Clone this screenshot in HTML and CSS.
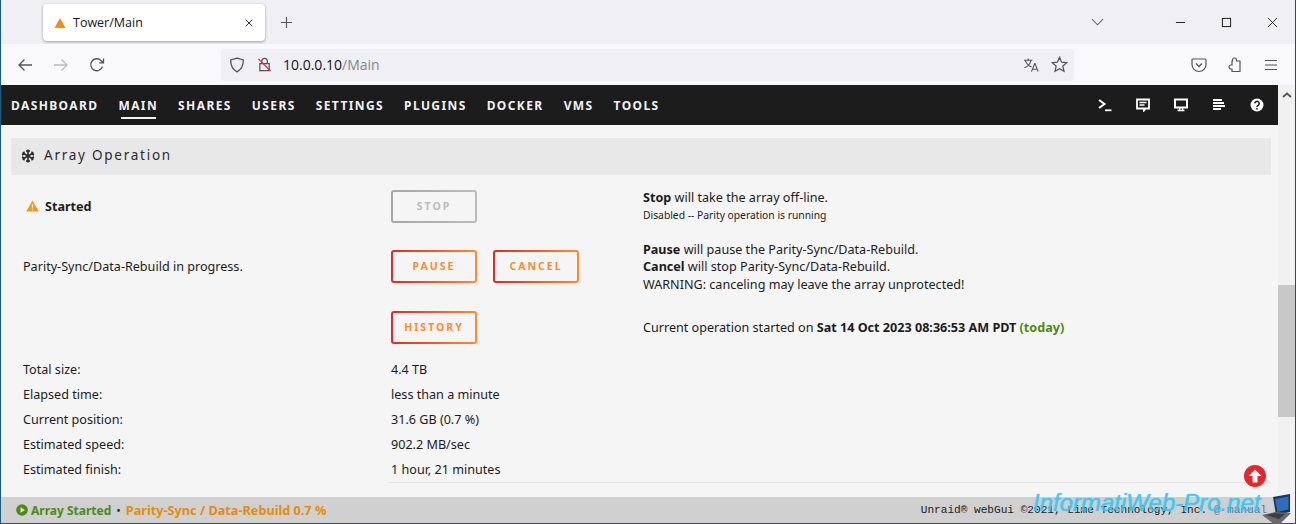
FILE: index.html
```html
<!DOCTYPE html>
<html lang="en">
<head>
<meta charset="utf-8">
<title>Tower/Main</title>
<link rel="stylesheet" href="styles.css">
</head>
<body>
<div class="window">
  <div class="tabbar">
    <div class="tab">
      <svg class="tab-icon" viewBox="0 0 12 12"><path d="M6 1 11.500 11H.5z" fill="#f28a1c"/></svg>
      <span class="tab-title">Tower/Main</span>
      <svg class="tab-close" viewBox="0 0 12 12"><path d="M2 2l8 8M10 2l-8 8" stroke="#222" stroke-width="1.100" fill="none"/></svg>
    </div>
    <svg class="newtab" viewBox="0 0 14 14"><path d="M7 1v12M1 7h12" stroke="#555" stroke-width="1.200" fill="none"/></svg>
    <div class="spacer"></div>
    <svg class="tablist" viewBox="0 0 14 8"><path d="M1 1l6 6 6-6" stroke="#666" stroke-width="1.100" fill="none"/></svg>
    <div class="winctl">
      <svg viewBox="0 0 12 12"><path d="M1 6h10" stroke="#111" stroke-width="1"/></svg>
      <svg viewBox="0 0 12 12"><rect x="1.500" y="1.500" width="9" height="9" stroke="#111" fill="none"/></svg>
      <svg viewBox="0 0 12 12"><path d="M1 1l10 10M11 1 1 11" stroke="#111" stroke-width=".9" fill="none"/></svg>
    </div>
  </div>
  <div class="toolbar">
    <svg class="tool back" viewBox="0 0 16 16"><path d="M15 8H2M7.500 2.500 2 8l5.500 5.500" stroke="#555" stroke-width="1.300" fill="none"/></svg>
    <svg class="tool fwd" viewBox="0 0 16 16"><path d="M1 8h13M8.500 2.500 14 8l-5.500 5.500" stroke="#bbb" stroke-width="1.300" fill="none"/></svg>
    <svg class="tool reload" viewBox="0 0 16 16"><path d="M13.500 9.500A6 6 0 1 1 12 3.500L14 5.500M14.500 1.500v4.300h-4.300" stroke="#555" stroke-width="1.300" fill="none"/></svg>
    <div class="urlbar">
      <svg class="shield" viewBox="0 0 16 16"><path d="M8 1.200 14.300 3c0 6-1.500 9.500-6.300 11.800C3.200 12.500 1.700 9 1.700 3z" stroke="#555" stroke-width="1.300" fill="none"/></svg>
      <svg class="lock" viewBox="0 0 16 16"><path d="M5 7V4.500a3 3 0 0 1 6 0V7M3 7h10v7.500H3z" stroke="#555" stroke-width="1.300" fill="none"/><path d="M1.500 2 14.500 15" stroke="#e22850" stroke-width="1.400"/></svg>
      <span class="url"><span class="host">10.0.0.10</span><span class="path">/Main</span></span>
      <div class="spacer"></div>
      <svg class="translate" viewBox="0 0 18 16"><path d="M1 3h9M5.500 1v2M8.500 3C7.500 7 5 9.500 1.500 11M2.500 3.500C4 7 6 9 9 10M12.500 6 9 15M12.500 6l3.500 9M10.200 12.500h4.600" stroke="#555" stroke-width="1.200" fill="none"/></svg>
      <svg class="star" viewBox="0 0 16 16"><path d="M8 1.300 10 5.800l4.800.5-3.600 3.200 1 4.800L8 11.900l-4.200 2.400 1-4.800L1.200 6.300 6 5.800z" stroke="#555" stroke-width="1.200" fill="none"/></svg>
    </div>
    <svg class="tool pocket" viewBox="0 0 16 16"><path d="M2 2h12a1 1 0 0 1 1 1v4.500a7 7 0 0 1-14 0V3a1 1 0 0 1 1-1z" stroke="#555" stroke-width="1.200" fill="none"/><path d="M5 6.500 8 9.500l3-3" stroke="#555" stroke-width="1.300" fill="none"/></svg>
    <svg class="tool ext" viewBox="0 0 16 16"><path d="M6.500 4V3a2 2 0 0 1 4 0v1H14v10.500H6V12H5a2 2 0 0 1 0-4h1V4z" stroke="#555" stroke-width="1.200" fill="none"/></svg>
    <svg class="tool menu" viewBox="0 0 16 16"><path d="M2 3.500h12M2 8h12M2 12.500h12" stroke="#555" stroke-width="1.200" fill="none"/></svg>
  </div>
  <div class="viewport">
    <div class="page">
      <nav class="nav">
        <a>DASHBOARD</a><a class="active">MAIN</a><a>SHARES</a><a>USERS</a><a>SETTINGS</a><a>PLUGINS</a><a>DOCKER</a><a>VMS</a><a>TOOLS</a>
        <div class="spacer"></div>
        <div class="nav-icons">
          <svg viewBox="0 0 14 14"><path d="M1 2l5.500 4L1 10" stroke="#fff" stroke-width="2" fill="none"/><path d="M7 12.300h6.500" stroke="#fff" stroke-width="1.800"/></svg>
          <svg viewBox="0 0 14 14"><path d="M1 1.500h12v9H9.500L8 12.500v-2H1z" stroke="#fff" stroke-width="1.800" fill="none"/><path d="M3.500 4.500h7M3.500 7h5" stroke="#fff" stroke-width="1.300"/></svg>
          <svg viewBox="0 0 14 14"><path d="M1 1.500h12v8H1z" stroke="#fff" stroke-width="2" fill="none"/><path d="M5.500 10v2M8.500 10v2M3.500 12.500h7" stroke="#fff" stroke-width="1.500"/></svg>
          <svg viewBox="0 0 14 14"><path d="M1 2h9M1 5h11M1 8h12M1 11h8" stroke="#fff" stroke-width="1.900"/></svg>
          <svg viewBox="0 0 14 14"><circle cx="7" cy="7" r="6.500" fill="#fff"/><path d="M4.800 5.400a2.200 2.100 0 1 1 3.300 1.900c-.8.500-1.100.8-1.100 1.600" stroke="#1c1c1c" stroke-width="1.500" fill="none"/><circle cx="7" cy="10.800" r=".9" fill="#1c1c1c"/></svg>
        </div>
      </nav>
      <main class="content">
        <h2 class="section-title">
          <svg class="snow" viewBox="0 0 14 14"><path d="M7 .5v13M1.400 3.700l11.200 6.600M12.600 3.700 1.400 10.300M5.200 1.500 7 3.200l1.800-1.700M5.200 12.500 7 10.800l1.800 1.700M1 6 3.300 5 2.800 2.600M13 8l-2.300 1 .5 2.400M13 6 10.700 5l.5-2.400M1 8l2.300 1-.5 2.400" stroke="#2b2b2b" stroke-width="1.600" fill="none"/></svg>
          <span>Array Operation</span>
        </h2>
        <div class="grid">
          <div class="row r-stop">
            <div class="c1 started"><svg class="warn" viewBox="0 0 14 13"><path d="M7 .5 13.800 12.500H.2z" fill="#f7941d"/><path d="M7 4.500v4M7 9.500v1.500" stroke="#fff" stroke-width="1.400"/></svg><b>Started</b></div>
            <div class="c2"><button class="btn disabled">STOP</button></div>
            <div class="c3"><p><b>Stop</b> will take the array off-line.</p><p class="small">Disabled -- Parity operation is running</p></div>
          </div>
          <div class="row r-pause">
            <div class="c1">Parity-Sync/Data-Rebuild in progress.</div>
            <div class="c2"><button class="btn">PAUSE</button><button class="btn">CANCEL</button></div>
            <div class="c3"><p><b>Pause</b> will pause the Parity-Sync/Data-Rebuild.</p><p><b>Cancel</b> will stop Parity-Sync/Data-Rebuild.</p><p>WARNING: canceling may leave the array unprotected!</p></div>
          </div>
          <div class="row r-history">
            <div class="c1"></div>
            <div class="c2"><button class="btn">HISTORY</button></div>
            <div class="c3"><p>Current operation started on <b>Sat 14 Oct 2023 08:36:53 AM PDT</b> <b class="today">(today)</b></p></div>
          </div>
          <div class="row r-info first"><div class="c1">Total size:</div><div class="c2">4.4 TB</div></div>
          <div class="row r-info"><div class="c1">Elapsed time:</div><div class="c2">less than a minute</div></div>
          <div class="row r-info"><div class="c1">Current position:</div><div class="c2">31.6 GB (0.7 %)</div></div>
          <div class="row r-info"><div class="c1">Estimated speed:</div><div class="c2">902.2 MB/sec</div></div>
          <div class="row r-info"><div class="c1">Estimated finish:</div><div class="c2">1 hour, 21 minutes</div></div>
        </div>
        <div class="rule"></div>
      </main>
      <footer class="footer">
        <svg class="play" viewBox="0 0 12 12"><circle cx="6" cy="6" r="5.800" fill="#4f8a10"/><path d="M4.500 3.200 9 6l-4.500 2.800z" fill="#ddd"/></svg>
        <b class="green">Array Started</b><span class="dot">•</span><b class="orange">Parity-Sync / Data-Rebuild 0.7 %</b>
        <div class="spacer"></div>
        <span class="copy">Unraid® webGui ©2021, Lime Technology, Inc. <span class="manual">@ manual</span></span>
      </footer>
      <svg class="to-top" viewBox="0 0 22 22"><circle cx="11" cy="11" r="11" fill="#e22828"/><path d="M11 4.500 17.500 11h-4v6.500h-5V11h-4z" fill="#fff"/></svg>
    </div>
    <div class="scrollbar">
      <svg class="sb-up" viewBox="0 0 10 6"><path d="M1 5l4-3.500L9 5" stroke="#555" stroke-width="1.800" fill="none"/></svg>
      <div class="sb-thumb"></div>
    </div>
  </div>
</div>
<div class="watermark">InformatiWeb-Pro.net</div>
<svg class="laptop" viewBox="0 0 30 30"><path d="M11 3 28 0v18L14 21z" fill="#1c3560"/><path d="M13 5 26.500 2.500v13L15.500 18z" fill="#2f6db8"/><path d="M0 21l13-3 16 1L18 30h-6z" fill="#6a6a6a"/><path d="M4 21l9-2 10 1-6 5z" fill="#3d3d3d"/></svg>
</body>
</html>
```
FILE: styles.css
```css
* { box-sizing: border-box; }
html, body { margin: 0; height: 100%; overflow: hidden; }
body { position: relative; font-family: "Noto Sans", sans-serif; color: #1c1c1c; }
svg { display: block; flex: none; }
p { margin: 0; }
.spacer { flex: 1; }
.window { width: 1296px; height: 524px; display: flex; flex-direction: column; border-left: 1px solid #1d5a7e; border-right: 1px solid #1d4a8a; border-bottom: 1px solid #1d5a7e; }

.tabbar { height: 44px; background: #f0f0f4; display: flex; align-items: center; padding-left: 42px; }
.tab { width: 222px; height: 37px; margin-top: 1px; background: #fff; border-radius: 4px; box-shadow: 0 1px 3px rgba(0,0,0,.35); display: flex; align-items: center; padding-left: 11px; }
.tab-icon { width: 12px; height: 12px; }
.tab-title { flex: 1; margin-left: 7px; font: 12.500px "Open Sans", sans-serif; color: #15141a; }
.tab-close { width: 10px; height: 10px; margin-right: 11px; }
.newtab { width: 13px; height: 13px; margin-left: 15px; }
.tablist { width: 13px; height: 8px; margin-right: 71px; }
.winctl { display: flex; gap: 35px; margin-right: 17px; align-items: center; }
.winctl svg { width: 11px; height: 11px; }

.toolbar { height: 41px; background: #f9f9fb; display: flex; align-items: center; }
.tool { width: 16px; height: 16px; }
.back { margin-left: 16px; }
.fwd { margin-left: 20px; }
.reload { margin-left: 20px; }
.urlbar { width: 853px; height: 32px; margin-left: 116px; background: #f0f0f4; border-radius: 4px; display: flex; align-items: center; padding: 0 6px 0 8px; }
.shield { width: 16px; height: 16px; }
.lock { width: 15px; height: 15px; margin-left: 12px; }
.url { margin-left: 11px; font: 14px "Open Sans", sans-serif; }
.host { color: #15141a; }
.path { color: #85858b; }
.translate { width: 17px; height: 16px; margin-right: 11px; }
.star { width: 17px; height: 17px; }
.pocket { margin-left: 117px; }
.ext { margin-left: 19px; }
.menu { margin-left: 21px; }

.viewport { flex: 1; display: flex; min-height: 0; }
.page { flex: 1; position: relative; display: flex; flex-direction: column; background: #f5f5f5; min-width: 0; }
.scrollbar { width: 17px; background: #f1f1f1; position: relative; display: flex; flex-direction: column; align-items: center; padding-top: 7px; }
.sb-up { width: 10px; height: 6px; }
.sb-thumb { width: 17px; height: 132px; background: #c8c8c8; margin-top: 187px; }

.nav { height: 40px; background: #1c1c1c; display: flex; align-items: center; padding: 0 14px 0 10px; flex: none; }
.nav a { color: #f2f2f2; font: 700 12px "Noto Sans", sans-serif; letter-spacing: 1.400px; margin-right: 20px; position: relative; }
.nav a.active::after { content: ""; position: absolute; left: 3px; right: 2px; bottom: -5px; height: 2px; background: #f2f2f2; }
.nav-icons { display: flex; gap: 24px; }
.nav-icons svg { width: 14px; height: 14px; }

.content { flex: 1; padding: 13px 7px 0 10px; min-height: 0; }
.section-title { margin: 0; height: 37px; background: #e8e8e8; display: flex; align-items: center; padding: 0 0 4px 10px; font: 400 13.500px "Noto Sans", sans-serif; letter-spacing: 1.750px; color: #2b2b2b; }
.snow { width: 14px; height: 14px; margin-right: 9px; margin-top: 3px; }

.grid { padding-left: 12px; font-size: 12.600px; color: #1c1c1c; }
.row { display: grid; grid-template-columns: 368px 252px 1fr; grid-template-rows: 100%; align-items: center; }
.r-stop { margin-top: 14px; height: 34px; }
.r-pause { margin-top: 26px; height: 34px; }
.r-history { margin-top: 27px; height: 34px; }
.r-info { height: 25px; }
.r-info.first { margin-top: 13px; }
.c3 { line-height: 17.500px; padding-top: 2px; }
.r-stop .c3 { padding-top: 0; }
.small { font-size: 10.300px; line-height: 16px; }
.started { display: flex; align-items: center; padding-left: 3px; }
.warn { width: 13px; height: 12px; margin-right: 6px; }
.c2 { display: flex; gap: 16px; }
.btn { width: 86px; height: 33px; padding: 0; border: 2px solid transparent; border-radius: 3px; background: linear-gradient(#f5f5f5, #f5f5f5) padding-box, linear-gradient(90deg, #e22828, #ff8c2f) border-box; font: 700 10.500px "Noto Sans", sans-serif; letter-spacing: 2px; color: #ff8c2f; }
.btn.disabled { background: linear-gradient(#f5f5f5, #f5f5f5) padding-box, linear-gradient(90deg, #a8a8a8, #bcbcbc) border-box; color: #bcbcbc; }
.today { color: #4f8a10; }
.rule { height: 1px; background: #e3e3e3; margin: 0 0 0 377px; }

.footer { height: 26px; flex: none; background: #d0d0d0; display: flex; align-items: center; padding: 0 0 0 15px; font-size: 12px; }
.play { width: 12px; height: 12px; margin-right: 3px; }
.green { color: #4f8a10; }
.orange { color: #e68a0e; font-size: 12.700px; }
.dot { margin: 0 5px; color: #333; }
.copy { font: 11.100px "Liberation Mono", monospace; color: #222; margin-right: 11px; }
.manual { color: #4a78a8; }

.to-top { position: absolute; right: 12px; top: 380px; width: 22px; height: 22px; }
.watermark { position: absolute; left: 1033px; top: 489px; font: italic 24px "Liberation Sans", sans-serif; color: #37c5f5; opacity: .9; text-shadow: 0 0 1px #37c5f5; white-space: nowrap; }
.laptop { position: absolute; right: 4px; bottom: 0; width: 30px; height: 30px; }
```
